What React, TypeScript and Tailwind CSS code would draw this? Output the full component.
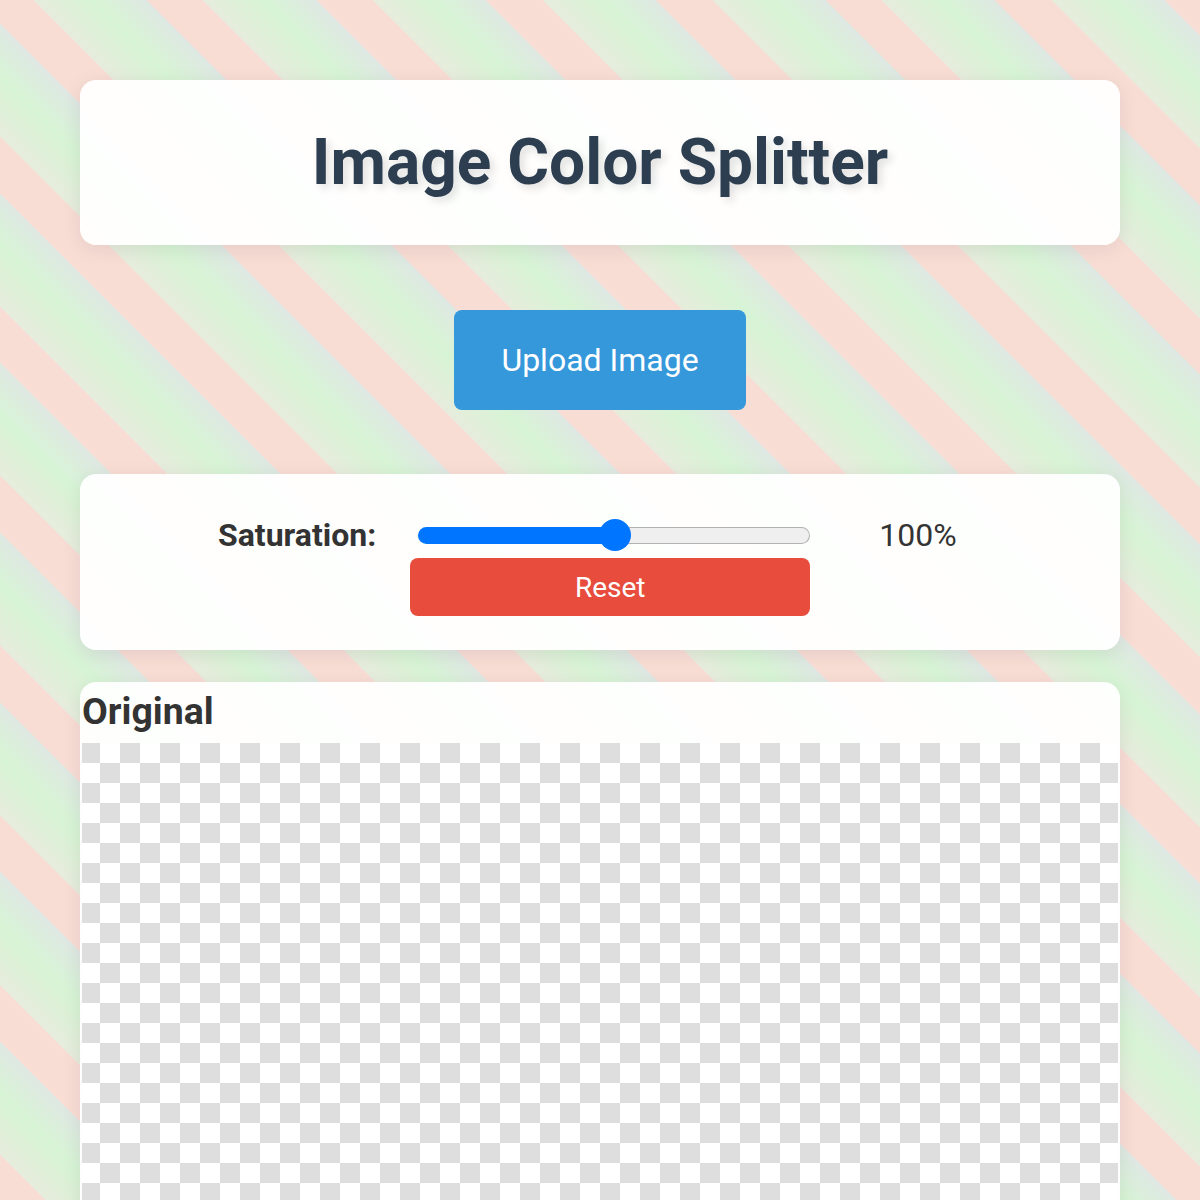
import React from "react";

export default function App() {
  return (
    <div
      className="min-h-screen bg-fixed bg-[repeating-linear-gradient(45deg,#f8ddd5_112px,#f8ddd5_152px,#e7ecdc_152px,#d7f4d5_195px,#dfe8e3_232px)] px-[80px] pt-[80px] font-['Roboto',sans-serif]"
    >
      {/* Title card */}
      <div className="rounded-[16px] bg-white/95 shadow-[0_4px_20px_rgba(0,0,0,0.08)] py-[45px]">
        <h1 className="text-center text-[64px] leading-[75px] font-bold text-[#2c3e50] [text-shadow:4px_4px_8px_rgba(0,0,0,0.12)]">
          Image Color Splitter
        </h1>
      </div>

      {/* Upload */}
      <div className="flex justify-center mt-[65px]">
        <button className="w-[292px] h-[100px] rounded-[8px] bg-[#3498db] text-white text-[32px] leading-[37px] flex items-center justify-center">
          Upload Image
        </button>
      </div>

      {/* Controls */}
      <div className="mt-[64px] rounded-[16px] bg-white/95 shadow-[0_4px_20px_rgba(0,0,0,0.08)] pt-[42px] pb-[34px]">
        <div className="grid grid-cols-[auto_400px_auto] gap-x-[34px] gap-y-[4px] items-center ml-[138px] w-max">
          <label className="h-[38px] flex items-center text-[32px] leading-[38px] font-bold text-[#333]">
            Saturation:
          </label>
          <div className="relative h-[38px] flex items-center">
            <div className="ml-[8px] w-[395px] h-[17px] flex">
              <div className="w-[197px] h-full rounded-l-full bg-[#0075ff]" />
              <div className="flex-1 h-full rounded-r-full bg-[#efefef] border border-l-0 border-[#b2b2b2]" />
            </div>
            <div className="absolute left-[189px] top-[3px] w-[32px] h-[32px] rounded-full bg-[#0075ff]" />
          </div>
          <span className="ml-[35px] text-[32px] leading-[38px] text-[#333]">100%</span>
          <button className="col-start-2 h-[58px] w-[400px] rounded-[8px] bg-[#e74c3c] text-white text-[28px] leading-[33px]">
            Reset
          </button>
        </div>
      </div>

      {/* Original */}
      <div className="mt-[32px] rounded-t-[16px] bg-white/95 shadow-[0_4px_20px_rgba(0,0,0,0.08)] p-[2px]">
        <h3 className="mt-[5px] mb-[10px] text-[37.44px] leading-[44px] font-bold text-[#333]">
          Original
        </h3>
        <div className="h-[700px] bg-[conic-gradient(#dedede_0_25%,#ffffff_0_50%,#dedede_0_75%,#ffffff_0)] bg-[length:40px_40px] bg-[position:-22px_0px]" />
      </div>
    </div>
  );
}
